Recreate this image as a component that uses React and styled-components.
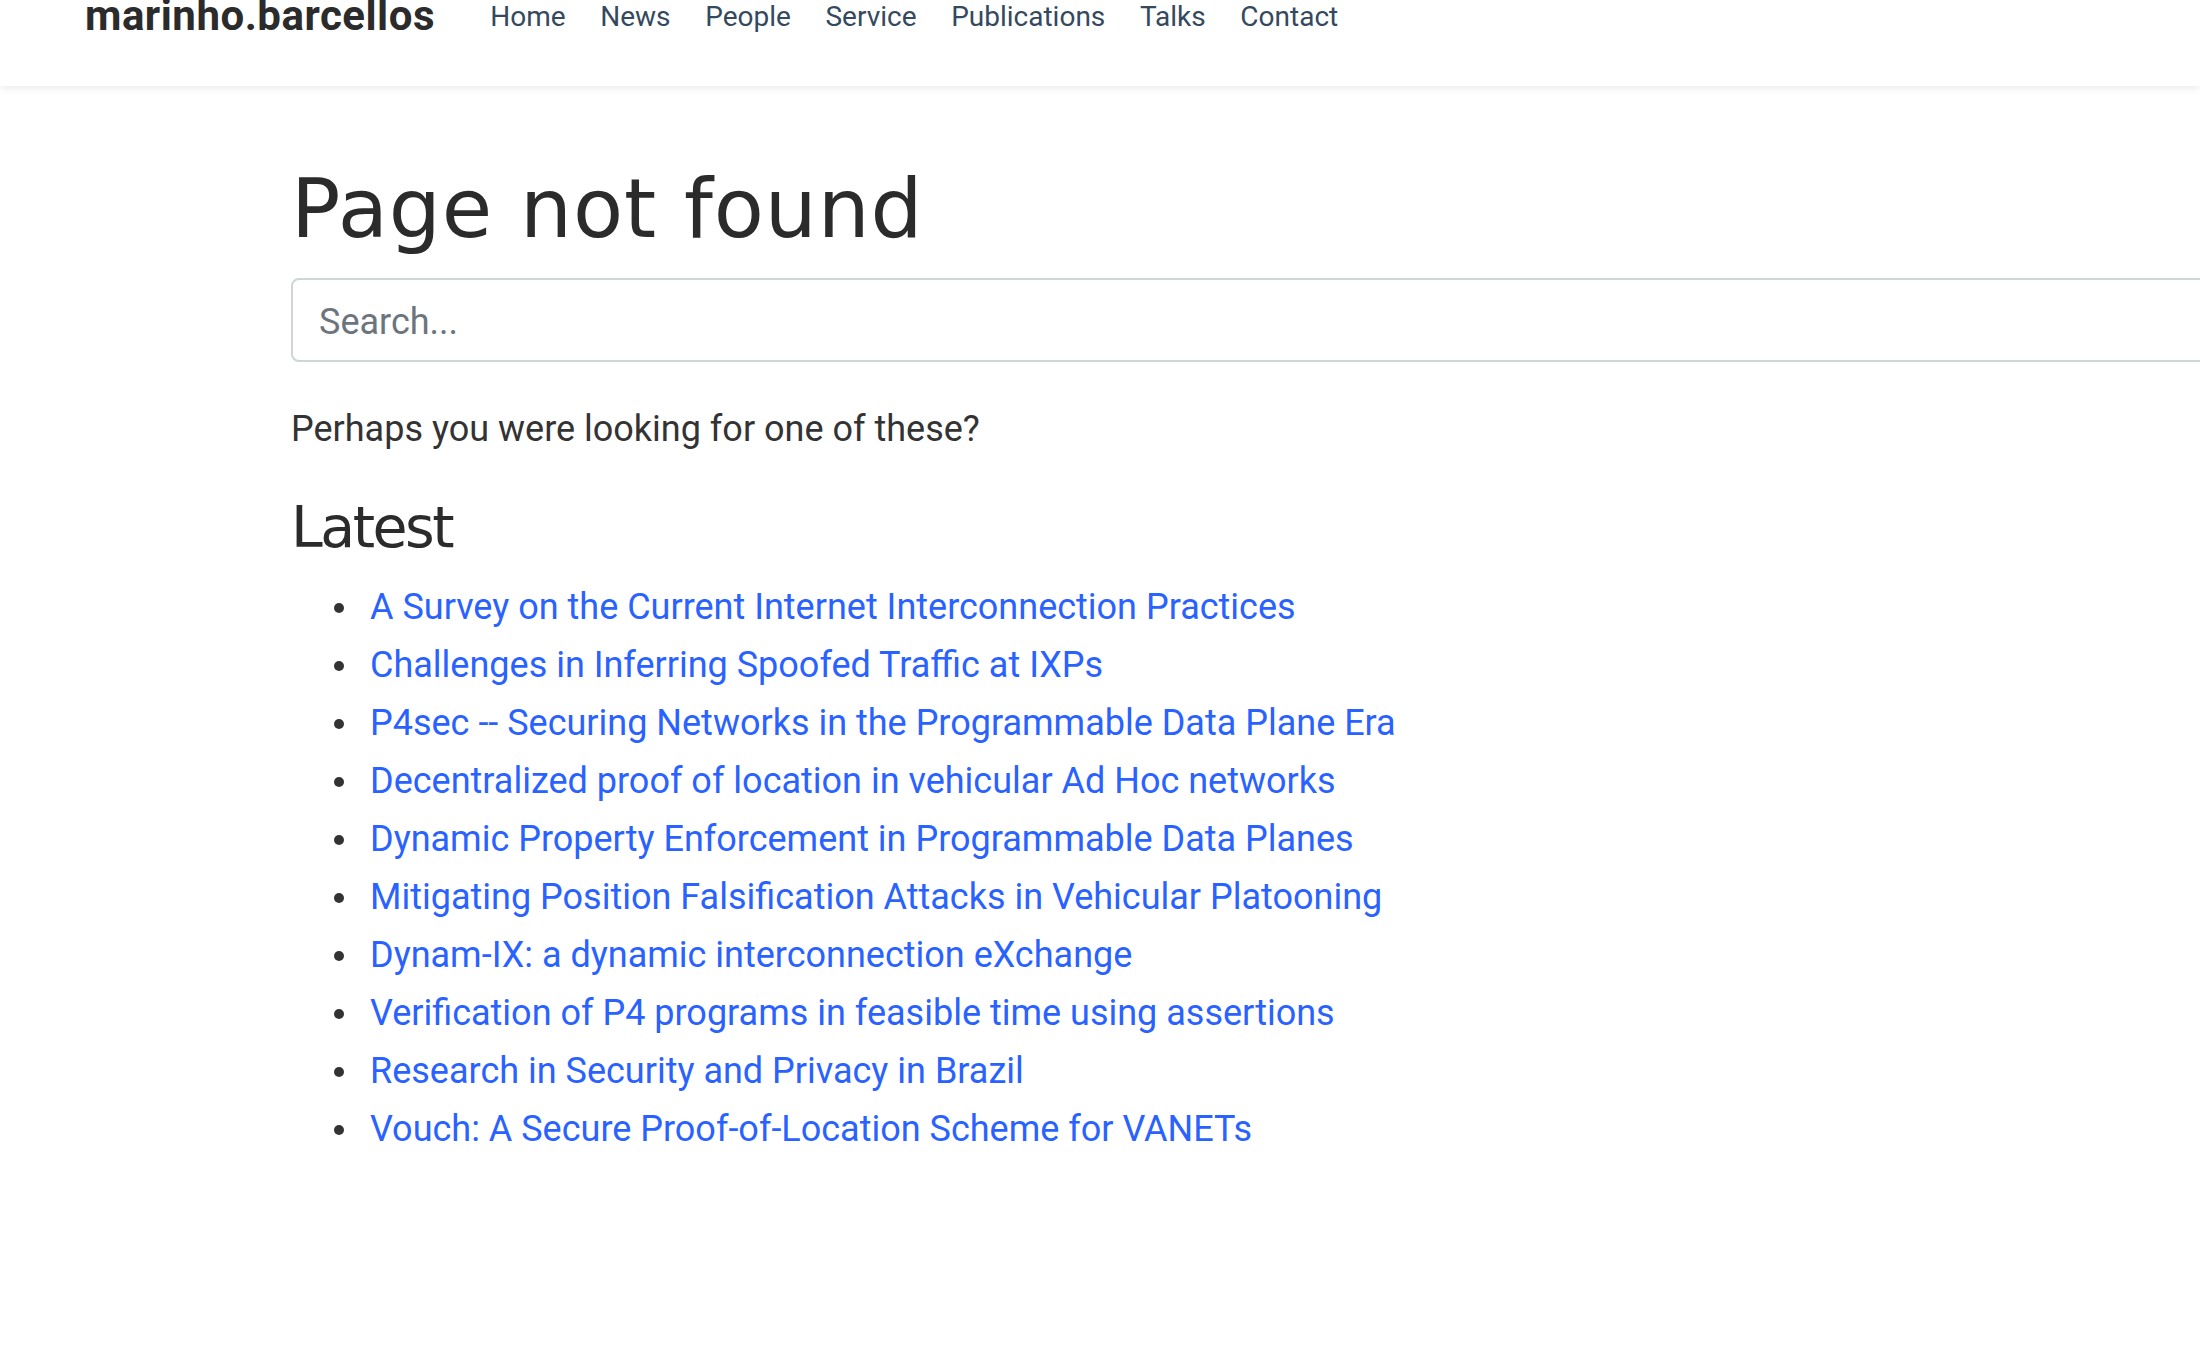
import React from "react";
import styled, { createGlobalStyle } from "styled-components";

const GlobalStyle = createGlobalStyle`
  html, body {
    margin: 0;
    padding: 0;
    background: #ffffff;
  }
  body {
    font-family: Roboto, "Liberation Sans", Arial, sans-serif;
    font-size: 36px;
    line-height: 1.6;
    color: #333333;
    overflow-x: hidden;
  }
  * { box-sizing: border-box; }
`;

const Page = styled.div`
  width: 100%;
  min-height: 1348px;
  overflow: hidden;
`;

const Navbar = styled.header`
  height: 86px;
  background: #ffffff;
  box-shadow: 0 2px 8px rgba(0, 0, 0, 0.09);
  display: flex;
  align-items: flex-start;
  padding-left: 85px;
  position: relative;
  z-index: 2;
`;

const Brand = styled.a`
  font-family: Roboto, "Liberation Sans", Arial, sans-serif;
  font-weight: 700;
  font-size: 42px;
  line-height: 32px;
  color: #2b2b2b;
  text-decoration: none;
  margin-right: 38px;
  letter-spacing: 0.5px;
`;

const NavList = styled.nav`
  display: flex;
  align-items: flex-start;
  margin-top: 3px;
`;

const NavLink = styled.a`
  font-family: Roboto, "Liberation Sans", Arial, sans-serif;
  font-size: 28px;
  line-height: 28px;
  color: #34495e;
  text-decoration: none;
  padding: 0 17.3px;
`;

const Main = styled.main`
  width: 2000px;
  margin-left: 291px;
  padding-top: 74px;
`;

const Title = styled.h1`
  font-family: "DejaVu Sans", Montserrat, sans-serif;
  font-weight: 400;
  font-size: 82px;
  line-height: 1.2;
  color: #2b2b2b;
  margin: 0 0 20px 0;
  letter-spacing: 0.9px;
`;

const SearchInput = styled.input`
  display: block;
  width: 100%;
  height: 84px;
  border: 2px solid #d0d5db;
  border-radius: 8px;
  padding: 3px 26px 0 26px;
  font-family: Roboto, "Liberation Sans", Arial, sans-serif;
  font-size: 36px;
  color: #495057;
  background: #ffffff;
  outline: none;
  &::placeholder {
    color: #6c757d;
  }
`;

const Lead = styled.p`
  margin: 39px 0 34px 0;
  font-size: 36px;
  line-height: 57.6px;
  color: #333333;
`;

const SectionTitle = styled.h2`
  font-family: "DejaVu Sans", Montserrat, sans-serif;
  font-weight: 400;
  font-size: 57px;
  line-height: 1.2;
  color: #2b2b2b;
  margin: 0 0 17px 0;
  letter-spacing: -2.5px;
`;

const List = styled.ul`
  list-style: none;
  margin: 0;
  padding: 0;
`;

const Item = styled.li`
  display: flex;
  align-items: center;
  line-height: 58px;
  font-size: 36px;
  &::before {
    content: "";
    flex: 0 0 auto;
    width: 10px;
    height: 10px;
    border-radius: 50%;
    background: #333333;
    margin-left: 43px;
    margin-right: 26px;
    margin-top: 2px;
  }
`;

const ItemLink = styled.a`
  color: #2962ff;
  text-decoration: none;
`;

const navItems = ["Home", "News", "People", "Service", "Publications", "Talks", "Contact"];

const latest = [
  "A Survey on the Current Internet Interconnection Practices",
  "Challenges in Inferring Spoofed Traffic at IXPs",
  "P4sec -- Securing Networks in the Programmable Data Plane Era",
  "Decentralized proof of location in vehicular Ad Hoc networks",
  "Dynamic Property Enforcement in Programmable Data Planes",
  "Mitigating Position Falsification Attacks in Vehicular Platooning",
  "Dynam-IX: a dynamic interconnection eXchange",
  "Verification of P4 programs in feasible time using assertions",
  "Research in Security and Privacy in Brazil",
  "Vouch: A Secure Proof-of-Location Scheme for VANETs",
];

export default function App() {
  return (
    <Page>
      <GlobalStyle />
      <Navbar>
        <Brand href="#">marinho.barcellos</Brand>
        <NavList>
          {navItems.map((n) => (
            <NavLink key={n} href="#">{n}</NavLink>
          ))}
        </NavList>
      </Navbar>
      <Main>
        <Title>Page not found</Title>
        <SearchInput type="search" placeholder="Search..." />
        <Lead>Perhaps you were looking for one of these?</Lead>
        <SectionTitle>Latest</SectionTitle>
        <List>
          {latest.map((t) => (
            <Item key={t}>
              <ItemLink href="#">{t}</ItemLink>
            </Item>
          ))}
        </List>
      </Main>
    </Page>
  );
}
